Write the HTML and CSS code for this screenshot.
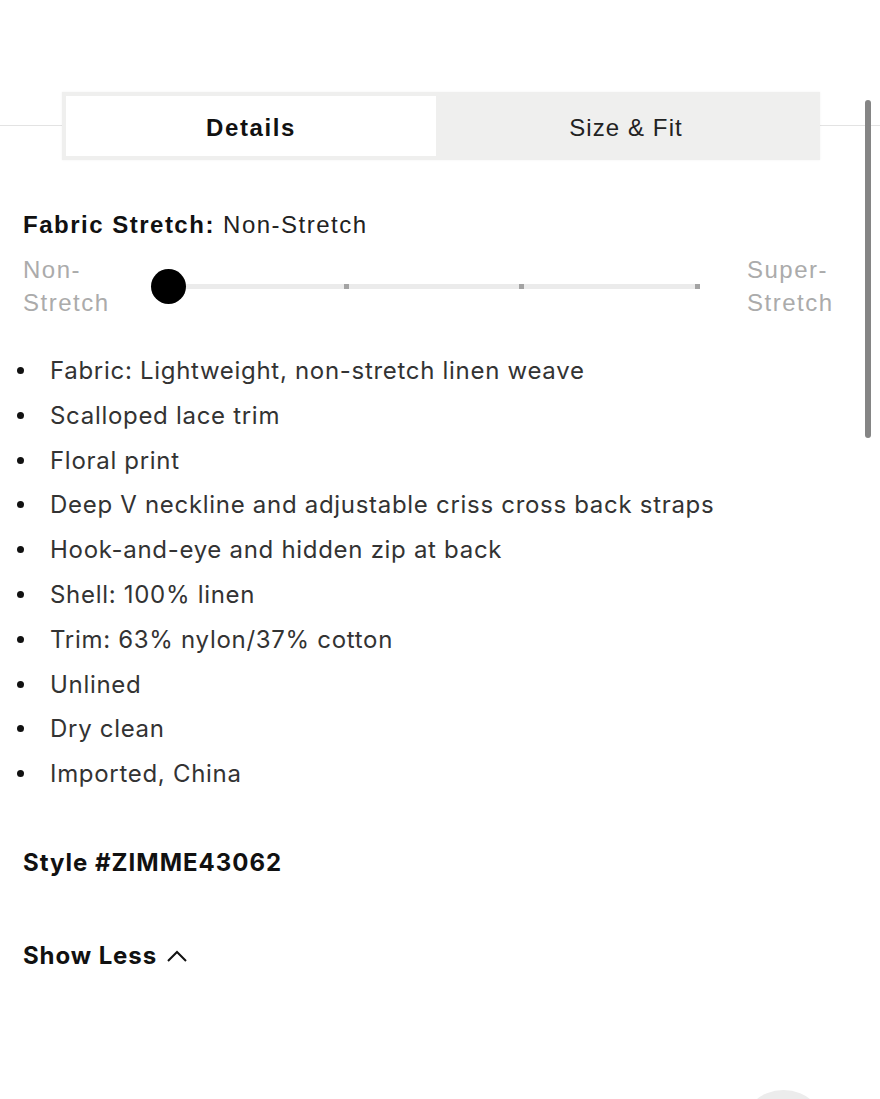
FILE: index.html
```html
<!DOCTYPE html>
<html>
  <head>
    <meta charset="UTF-8">
    <title>Details</title>
    <link rel="stylesheet" href="styles.css">
  </head>
  <body>
    <main class="sheet">
      <div class="tabs-row">
        <div class="tabs">
          <button class="tabs__item tabs__item--active">Details</button>
          <button class="tabs__item">Size &amp; Fit</button>
        </div>
      </div>

      <section class="details">
        <p class="stretch__title"><b>Fabric Stretch:</b> Non-Stretch</p>
        <div class="stretch">
          <span class="stretch__label">Non-<br>Stretch</span>
          <div class="stretch__track">
            <i class="stretch__tick stretch__tick--start"></i>
            <i class="stretch__tick"></i>
            <i class="stretch__tick"></i>
            <i class="stretch__tick"></i>
            <span class="stretch__knob"></span>
          </div>
          <span class="stretch__label">Super-<br>Stretch</span>
        </div>

        <ul class="details__list">
          <li>Fabric: Lightweight, non-stretch linen weave</li>
          <li>Scalloped lace trim</li>
          <li>Floral print</li>
          <li>Deep V neckline and adjustable criss cross back straps</li>
          <li>Hook-and-eye and hidden zip at back</li>
          <li>Shell: 100% linen</li>
          <li>Trim: 63% nylon/37% cotton</li>
          <li>Unlined</li>
          <li>Dry clean</li>
          <li>Imported, China</li>
        </ul>

        <p class="details__style">Style #ZIMME43062</p>

        <a class="details__toggle" href="#">Show Less
          <svg class="details__chevron" viewBox="0 0 22 13" width="22" height="13">
            <polyline points="2,12 11,3 20,12" fill="none" stroke="#111" stroke-width="2"/>
          </svg>
        </a>
      </section>

      <span class="scrollbar"></span>
      <span class="fab"></span>
    </main>
  </body>
</html>
```

FILE: styles.css
```css
* {
  box-sizing: border-box;
}
body {
  margin: 0;
  background-color: #fff;
  font-family: Inter, "Noto Sans", sans-serif;
  color: #222;
}
.sheet {
  position: relative;
  height: 1099px;
  overflow: hidden;
  padding-top: 92px;
}

/* tab switch with the rule running behind it */
.tabs-row {
  padding: 0 60px 0 62px;
  background: linear-gradient(#e3e3e3, #e3e3e3) 0 33px / 100% 1px no-repeat;
}
.tabs {
  display: flex;
  height: 68px;
  padding: 4px;
  background-color: #efefee;
  box-shadow: 0 0 2px rgba(0,0,0,0.06);
}
.tabs__item {
  flex: 1;
  border: none;
  background: transparent;
  font-family: "Liberation Sans", Arial, sans-serif;
  font-size: 24px;
  letter-spacing: 1.1px;
  color: #222;
  padding: 4px 0 0;
}
.tabs__item--active {
  flex: 0 0 370px;
  background-color: #fff;
  font-weight: 700;
  letter-spacing: 1.6px;
  color: #111;
}

.details {
  padding: 51px 20px 0 23px;
}
.stretch__title {
  margin: 0;
  font-family: "Liberation Sans", Arial, sans-serif;
  font-size: 24px;
  letter-spacing: 1.5px;
  color: #222;
}
.stretch__title b {
  color: #111;
}
.stretch {
  display: flex;
  align-items: center;
  margin-top: 14px;
}
.stretch__label {
  font-family: "Liberation Sans", Arial, sans-serif;
  font-size: 24px;
  letter-spacing: 1.5px;
  line-height: 33px;
  color: #ababab;
  width: 90px;
}
.stretch__label:last-child {
  margin-left: 47px;
}
.stretch__track {
  position: relative;
  display: flex;
  justify-content: space-between;
  align-items: center;
  width: 532px;
  height: 5px;
  margin-left: 55px;
  background-color: #ebebeb;
}
.stretch__tick {
  width: 5px;
  height: 5px;
  background-color: #a3a3a3;
}
.stretch__tick--start {
  visibility: hidden;
}
.stretch__knob {
  position: absolute;
  left: -17px;
  top: -15px;
  width: 35px;
  height: 35px;
  border-radius: 50%;
  background-color: #000;
}

.details__list {
  list-style: none;
  margin: 30px 0 0 -6px;
  padding: 0;
  font-size: 24px;
  letter-spacing: 0.7px;
  line-height: 44.8px;
  color: #333;
}
.details__list li::before {
  content: "";
  display: inline-block;
  width: 7px;
  height: 7px;
  border-radius: 50%;
  background-color: #111;
  margin-right: 26px;
  vertical-align: 5px;
}
.details__style {
  margin: 51px 0 0;
  font-size: 24px;
  font-weight: 700;
  letter-spacing: 1px;
  color: #111;
}
.details__toggle {
  display: inline-flex;
  align-items: center;
  gap: 9px;
  margin-top: 64px;
  font-size: 24px;
  font-weight: 700;
  letter-spacing: 0.9px;
  color: #111;
  text-decoration: none;
}

.scrollbar {
  position: absolute;
  left: 865px;
  top: 100px;
  width: 6px;
  height: 338px;
  border-radius: 3px;
  background-color: #858585;
}
.fab {
  position: absolute;
  left: 740px;
  top: 1090px;
  width: 87px;
  height: 87px;
  border-radius: 50%;
  background-color: #ececec;
}
```
